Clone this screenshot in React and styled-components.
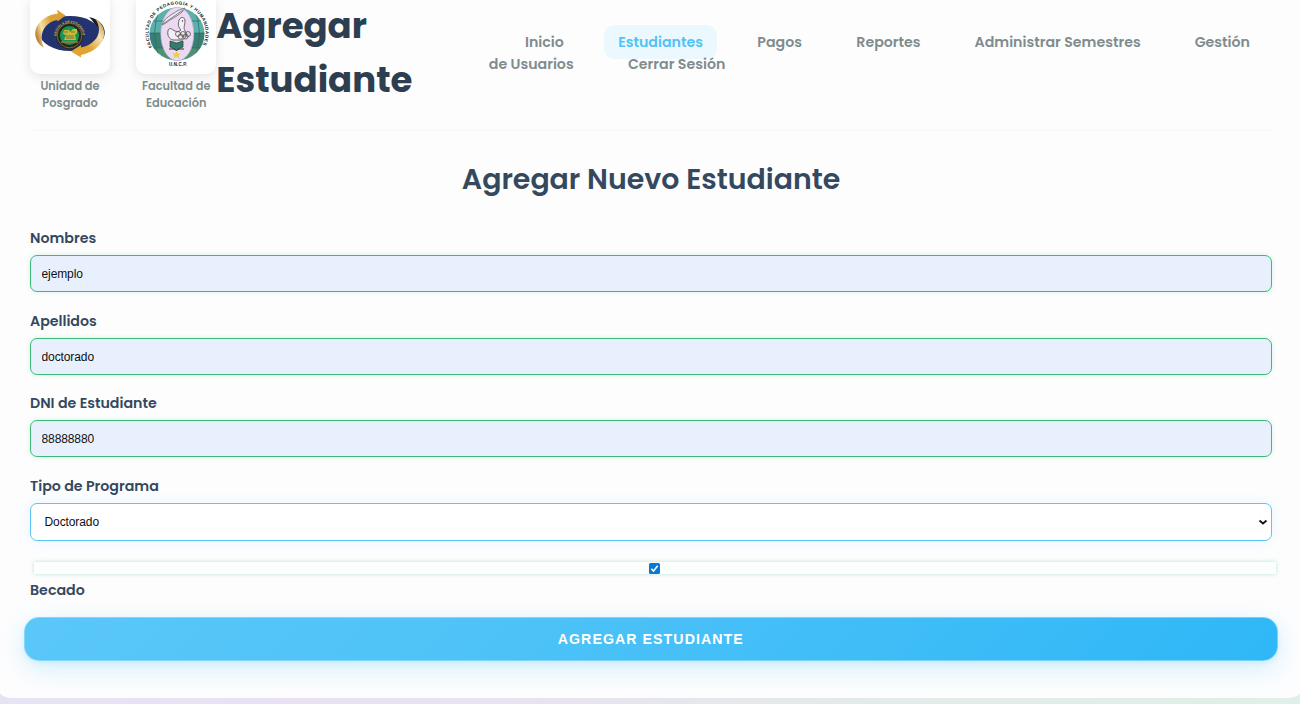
import React from 'react';
import styled, { createGlobalStyle } from 'styled-components';

const GlobalStyle = createGlobalStyle`
  *, *::before, *::after { box-sizing: border-box; }
  body {
    margin: 0;
    overflow: hidden;
    font-family: Poppins, Inter, sans-serif;
    color: #34495e;
  }
`;

const Page = styled.div`
  height: 704px;
  overflow: hidden;
  background: linear-gradient(90deg, #e6e4f4 0%, #e9e1f3 22%, #e8e2f1 40%, #e3ebe9 65%, #e0efe8 100%);
`;

const Card = styled.main`
  height: 698px;
  margin: 0 -5px;
  padding: 0 33px 0 35px;
  background: #fdfdfe;
  border-radius: 0 0 16px 16px;
`;

const Header = styled.header`
  display: flex;
  height: 131px;
  border-bottom: 2px solid #f8f9fa;
`;

const Logos = styled.div`
  display: flex;
  flex: none;
  gap: 26.2px;
  width: 186.2px;
`;

const LogoBlock = styled.div`
  width: 80px;
  flex: none;
`;

const LogoTile = styled.div`
  height: 80px;
  margin-top: -6px;
  padding: 5px;
  background: #fff;
  border-radius: 10px;
  box-shadow: 0 3px 11px rgba(0, 0, 0, 0.1);
  svg { display: block; width: 70px; height: 70px; }
`;

const Caption = styled.div`
  margin-top: 4.2px;
  font-size: 11.36px;
  line-height: 16.6px;
  font-weight: 600;
  color: #7f8c8d;
  text-align: center;
  white-space: nowrap;
`;

const Text = styled.span`
  letter-spacing: ${(p) => p.$track || 0}px;
  white-space: nowrap;
`;

const Title = styled.h1`
  flex: none;
  width: 240px;
  margin: -1px 0 0;
  font-size: 35.5px;
  line-height: 53.8px;
  font-weight: 700;
  color: #2c3e50;
`;

const Nav = styled.nav`
  padding-top: 32.4px;
  flex: 1;
  min-width: 0;
`;

const NavLine = styled.div`
  display: flex;
  height: 21.3px;
  margin-left: ${(p) => p.$indent}px;
  gap: ${(p) => p.$gap}px;
`;

const NavLink = styled.a`
  flex: none;
  width: ${(p) => p.$width}px;
  font-size: 14.2px;
  line-height: 21.3px;
  font-weight: 600;
  color: ${(p) => (p.$active ? '#4fc3f7' : '#7f8c8d')};
  ${(p) => p.$active && `
    height: 34px;
    margin: -7px -14px;
    padding: 7px 14px;
    width: ${p.$width + 28}px;
    border-radius: 11px;
    background: #ebf8fe;
  `}
`;

const Heading = styled.h2`
  margin: 26px 0 0;
  font-size: 28.4px;
  line-height: 44px;
  font-weight: 600;
  text-align: center;
`;

const Form = styled.form`
  padding-top: 26px;
`;

const Field = styled.div`
  height: 82.5px;
`;

const Label = styled.label`
  display: block;
  height: 28px;
  font-size: 14.2px;
  line-height: 22px;
  font-weight: 600;
`;

const Input = styled.input`
  display: block;
  width: 100%;
  height: 37px;
  padding: 1px 10.5px 0;
  border: 1px solid #3dbb76;
  border-radius: 7px;
  background: #e8f0fe;
  box-shadow: 0 0 5px rgba(46, 204, 113, 0.2);
  font: 12px Arial, "Liberation Sans", sans-serif;
  letter-spacing: -0.1px;
  color: #111;
`;

const SelectBox = styled.div`
  display: flex;
  align-items: center;
  justify-content: space-between;
  height: 38px;
  padding: 0 3px 0 13.5px;
  border: 1px solid #5bc5f5;
  border-radius: 7px;
  background: #fff;
  box-shadow: 0 0 14px rgba(79, 195, 247, 0.13);
  font: 12px Arial, "Liberation Sans", sans-serif;
  letter-spacing: -0.1px;
  color: #111;
`;

const CheckRow = styled.div`
  display: flex;
  align-items: center;
  justify-content: center;
  height: 11.3px;
  margin: 5.4px -3.8px 0 3.6px;
  box-shadow: 0 0 4px rgba(46, 180, 113, 0.35);
  background: #fdfefe;
  svg { display: block; width: 11px; height: 11px; }
`;

const CheckLabel = styled(Label)`
  margin-top: 5px;
  height: 22px;
`;

const Submit = styled.button`
  display: block;
  width: calc(100% + 11.5px);
  height: 44px;
  margin: 16px -6px 0;
  padding: 0;
  border: 1px solid rgba(160, 225, 252, 0.6);
  border-radius: 15px;
  background: linear-gradient(135deg, #5ac7f9, #4fc3f7 35%, #2fb7f7) border-box;
  box-shadow: 0 8px 26px rgba(79, 195, 247, 0.24), 0 2px 5px rgba(79, 195, 247, 0.15);
  color: #fff;
  font: bold 14.2px Arial, "Liberation Sans", sans-serif;
`;

function PostgraduateLogo() {
  return (
    <svg viewBox="0 0 70 70" aria-hidden="true">
      <defs>
        <linearGradient id="gold" x1="0" x2="1" y1="0.6" y2="0.2">
          <stop offset="0" stopColor="#b98234" />
          <stop offset=".22" stopColor="#f6e0a6" />
          <stop offset=".55" stopColor="#dca33a" />
          <stop offset="1" stopColor="#d99f35" />
        </linearGradient>
        <linearGradient id="goldRight" x1="1" x2="0" y1="0" y2="1">
          <stop offset="0" stopColor="#b88735" />
          <stop offset=".3" stopColor="#f5e2b4" />
          <stop offset=".6" stopColor="#e0a534" />
          <stop offset="1" stopColor="#e4a42b" />
        </linearGradient>
        <path id="schoolArc" d="M21.500 37a13 13 0 0 1 26 0" />
      </defs>
      <path d="M54 18C74 22 76 43 54 51L50 46C63 38 64 27 54 18Z" fill="#1d1a24" />
      <ellipse cx="35" cy="34.500" rx="30" ry="17.500" fill="#23336f" />
      <path d="M9 49C-6 40 -2 18 23 14.500L21.700 10.500 30.500 16.500 22.500 22.500 22.500 21C9 23 3 36 9 49Z" fill="url(#gold)" />
      <path d="M60 19.500C76 29 71 51 46 56L46 58.500 36 52.500 46 46 46 48.500C62 45 69 32 60 19.500Z" fill="url(#goldRight)" />
      <circle cx="34.500" cy="36.500" r="13.700" fill="#28251f" />
      <circle cx="34.500" cy="36.500" r="12.300" fill="none" stroke="#8f7a3c" strokeWidth=".8" />
      <circle cx="34.500" cy="36.500" r="9.600" fill="#149552" />
      <path d="M29 31h5l1 2 3-3h4v4l-2 2 1 5H29l2-5-3-1Z" fill="#c6ba3c" />
      <path d="M29 33h4m3 0h4m-9 4h8m-8 2h8" stroke="#76742b" strokeWidth="1" />
      <path d="M26 43h17" stroke="#9f7a36" strokeWidth="1.500" />
      <text fill="#d0b36c" fontFamily="Liberation Sans" fontSize="3.400" fontWeight="700">
        <textPath href="#schoolArc" textLength="40">ESCUELA DE POSGRADO</textPath>
      </text>
    </svg>
  );
}

function FacultyLogo() {
  return (
    <svg viewBox="0 0 70 70" aria-hidden="true">
      <defs>
        <clipPath id="globe"><ellipse cx="36" cy="35" rx="27.500" ry="26.500" /></clipPath>
        <path id="facultyArc" d="M11.200 48A28.500 28.500 0 1 1 60.800 48" />
      </defs>
      <g clipPath="url(#globe)">
        <path d="M5 5h62v29H5Z" fill="#5bb0ab" />
        <path d="M5 34h62v15H5Z" fill="#397f74" />
        <path d="M5 49h62v20H5Z" fill="#4b9275" />
        <path d="M20 7Q7 34 20 63M52 7Q65 34 52 63M7 34h60M8 49h58M8 22h58" fill="none" stroke="#2d6965" strokeWidth=".7" />
      </g>
      <ellipse cx="36.300" cy="35" rx="16.500" ry="26.800" fill="#ead9f1" stroke="#bfb2cc" strokeWidth=".7" />
      <path d="M21 26c2-6 7-9 12-12 4-3 7-4 11-5l-3 4c-5 5-12 7-16 11ZM22 25l20-14" fill="#ece5ee" stroke="#696874" strokeWidth=".8" />
      <path d="M38 21c2-4 6-3 6 1 0 5-2 6 0 10 3 3 1 7-3 9H32c-4-1-6-5-5-9 0-3 3-3 5-1 3 2 6 2 8 0-3-3-3-6-2-10Z" fill="#f5eef7" stroke="#555" strokeWidth=".9" />
      <circle cx="41.500" cy="22" r=".7" fill="#333" />
      <g fill="none" stroke="#555" strokeWidth=".8">
        <circle cx="37" cy="35" r="2.500" /><circle cx="42" cy="35" r="2.500" /><circle cx="47" cy="35" r="2.500" />
        <circle cx="39.500" cy="37.500" r="2.500" /><circle cx="44.500" cy="37.500" r="2.500" />
      </g>
      <path d="M29 42l6.500 2 6.500-2v6l-6.500 3-6.500-3Z" fill="#327d6d" stroke="#333" strokeWidth=".7" />
      <path d="M28 50h5l2.500 1.500 2.500-1.500h5" fill="none" stroke="#333" strokeWidth="1" />
      <path d="m35.500 52 1 2.500 3 0-2 2 1 3-3-2-3 2 1-3-2-2h3Z" fill="#e3d044" />
      <text fill="#161b1b" fontFamily="Liberation Sans" fontSize="4.500" fontWeight="700">
        <textPath href="#facultyArc" textLength="116">FACULTAD DE PEDAGOGÍA Y HUMANIDADES</textPath>
      </text>
      <text x="28" y="66.500" fill="#161b1b" fontFamily="Liberation Sans" fontSize="4.500" fontWeight="700" textLength="18">U.N.C.P.</text>
    </svg>
  );
}

const navMain = [
  { label: 'Inicio', width: 39 },
  { label: 'Estudiantes', width: 85, active: true },
  { label: 'Pagos', width: 44.8 },
  { label: 'Reportes', width: 64 },
  { label: 'Administrar Semestres', width: 166 },
  { label: 'Gestión', width: 56 },
];

const fields = [
  { label: 'Nombres', value: 'ejemplo' },
  { label: 'Apellidos', value: 'doctorado' },
  { label: 'DNI de Estudiante', value: '88888880' },
];

export default function App() {
  return (
    <Page>
      <GlobalStyle />
      <Card>
        <Header>
          <Logos>
            <LogoBlock>
              <LogoTile><PostgraduateLogo /></LogoTile>
              <Caption>Unidad de<br />Posgrado</Caption>
            </LogoBlock>
            <LogoBlock>
              <LogoTile><FacultyLogo /></LogoTile>
              <Caption>Facultad de<br />Educación</Caption>
            </LogoBlock>
          </Logos>
          <Title>Agregar<br />Estudiante</Title>
          <Nav>
            <NavLine $indent={68.8} $gap={54.2}>
              {navMain.map((n) => (
                <NavLink key={n.label} $width={n.width} $active={n.active}>
                  <Text>{n.label}</Text>
                </NavLink>
              ))}
            </NavLine>
            <NavLine $indent={32.6} $gap={54.2}>
              <NavLink $width={85}><Text>de Usuarios</Text></NavLink>
              <NavLink $width={98}><Text>Cerrar Sesión</Text></NavLink>
            </NavLine>
          </Nav>
        </Header>
        <Heading>Agregar Nuevo Estudiante</Heading>
        <Form onSubmit={(e) => e.preventDefault()}>
          {fields.map((f) => (
            <Field key={f.label}>
              <Label>{f.label}</Label>
              <Input defaultValue={f.value} />
            </Field>
          ))}
          <Field>
            <Label>Tipo de Programa</Label>
            <SelectBox>
              Doctorado
              <svg width="10" height="8" viewBox="0 0 10 8"><path d="m1.500 2.500 3.500 3 3.500-3" fill="none" stroke="#111" strokeWidth="1.800" /></svg>
            </SelectBox>
          </Field>
          <CheckRow>
            <svg viewBox="0 0 11 11"><rect width="11" height="11" rx="1.500" fill="#0878d6" /><path d="m2.300 5.800 2.200 2.200 4.200-5.300" fill="none" stroke="#fff" strokeWidth="1.500" /></svg>
          </CheckRow>
          <CheckLabel>Becado</CheckLabel>
          <Submit><Text $track={1.05}>AGREGAR ESTUDIANTE</Text></Submit>
        </Form>
      </Card>
    </Page>
  );
}
